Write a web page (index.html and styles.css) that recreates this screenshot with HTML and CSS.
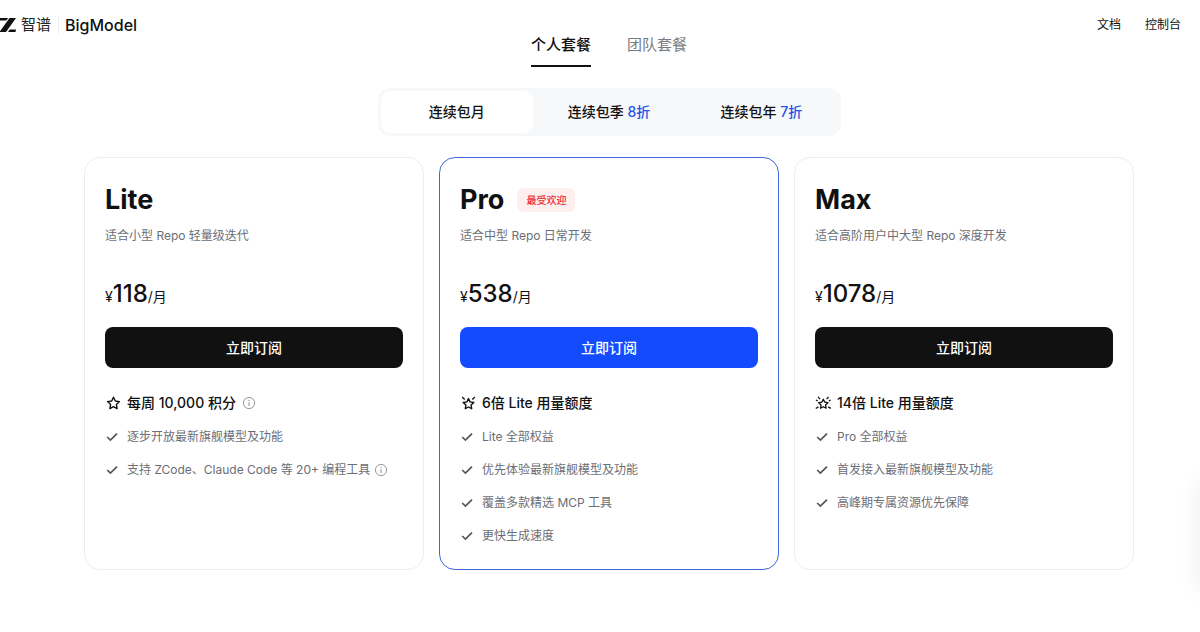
FILE: index.html
```
<!DOCTYPE html>
<html lang="zh-CN">
<head>
    <meta charset="UTF-8">
    <meta name="viewport" content="width=device-width, initial-scale=1.0">
    <title>智谱 BigModel</title>
    <link rel="stylesheet" href="styles.css">
</head>
<body>
    <!-- shared icons -->
    <svg class="sprite" aria-hidden="true">
        <symbol id="check" viewBox="0 0 14 14">
            <path d="M2.2 7 5.400 10 12 3.600" fill="none" stroke="currentColor" stroke-width="1.700"/>
        </symbol>
        <symbol id="info" viewBox="0 0 14 14">
            <circle cx="7" cy="7" r="5.6" fill="none" stroke="currentColor" stroke-width="0.9"/>
            <path d="M7 6.2V10" fill="none" stroke="currentColor" stroke-width="1"/>
            <circle cx="7" cy="4.4" r="0.7" fill="currentColor"/>
        </symbol>
        <symbol id="star" viewBox="0 0 16 16">
            <path d="M8.500 2.200 10.300 6l4.100.6-3 2.900.7 4.100-3.600-1.900-3.600 1.900.7-4.100-3-2.900 4.100-.6z" fill="none" stroke="currentColor" stroke-width="1.4" stroke-linejoin="round"/>
        </symbol>
        <symbol id="star-two" viewBox="0 0 16 16">
            <path d="M8.500 3.600 10.100 6.900l3.700.6-2.700 2.600.6 3.600-3.200-1.700-3.200 1.700.6-3.600L3.200 7.500l3.700-.6z" fill="none" stroke="currentColor" stroke-width="1.4" stroke-linejoin="round"/>
            <path d="M2.200 2 4.700 4.400M14.800 2 12.300 4.400" fill="none" stroke="currentColor" stroke-width="1.4"/>
        </symbol>
        <symbol id="star-four" viewBox="0 0 16 16">
            <path d="M8.300 4.200 9.800 7.200l3.100.5-2.300 2.300.5 3.200-2.800-1.500-2.800 1.500.5-3.200L3.700 7.700l3.100-.5z" fill="none" stroke="currentColor" stroke-width="1.300" stroke-linejoin="round"/>
            <path d="M3 1.800 5 4.200M13.600 1.800 11.600 4.200M.9 5l1.800.9M15.700 5l-1.800.9M.8 13.500l2.600-1.600M15.800 13.500l-2.600-1.600" fill="none" stroke="currentColor" stroke-width="1.300"/>
        </symbol>
    </svg>

    <header class="header">
        <a class="brand" href="#">
            <svg class="brand-mark" viewBox="0 0 16 14" aria-hidden="true">
                <path d="M0 0H8.300L6.200 2.500H0zM9.500 0h6.500L6 14H0V13.300zM9.800 11.500H16L15.500 14H8z" fill="#111"/>
            </svg>
            <span class="brand-cn">智谱</span>
            <span class="brand-en">BigModel</span>
        </a>
        <nav class="nav">
            <a href="#">文档</a>
            <a href="#">控制台</a>
        </nav>
    </header>

    <main class="main">
        <div class="tabs">
            <button class="tab active" type="button">个人套餐</button>
            <button class="tab" type="button">团队套餐</button>
        </div>

        <div class="period">
            <button class="period-item active" type="button">连续包月</button>
            <button class="period-item" type="button">连续包季 <span class="discount">8折</span></button>
            <button class="period-item" type="button">连续包年 <span class="discount">7折</span></button>
        </div>

        <div class="plans">
            <section class="card">
                <h2 class="title">Lite</h2>
                <p class="desc">适合小型 Repo 轻量级迭代</p>
                <p class="price">¥<span class="amount">118</span>/月</p>
                <button class="buy" type="button">立即订阅</button>
                <ul class="features">
                    <li class="quota"><svg class="star"><use href="#star"/></svg>每周 10,000 积分<svg class="info"><use href="#info"/></svg></li>
                    <li><svg class="check"><use href="#check"/></svg>逐步开放最新旗舰模型及功能</li>
                    <li><svg class="check"><use href="#check"/></svg>支持 ZCode、Claude Code 等 20+ 编程工具<svg class="info"><use href="#info"/></svg></li>
                </ul>
            </section>

            <section class="card popular">
                <h2 class="title">Pro <span class="badge">最受欢迎</span></h2>
                <p class="desc">适合中型 Repo 日常开发</p>
                <p class="price">¥<span class="amount">538</span>/月</p>
                <button class="buy" type="button">立即订阅</button>
                <ul class="features">
                    <li class="quota"><svg class="star"><use href="#star-two"/></svg>6倍 Lite 用量额度</li>
                    <li><svg class="check"><use href="#check"/></svg>Lite 全部权益</li>
                    <li><svg class="check"><use href="#check"/></svg>优先体验最新旗舰模型及功能</li>
                    <li><svg class="check"><use href="#check"/></svg>覆盖多款精选 MCP 工具</li>
                    <li><svg class="check"><use href="#check"/></svg>更快生成速度</li>
                </ul>
            </section>

            <section class="card">
                <h2 class="title">Max</h2>
                <p class="desc">适合高阶用户中大型 Repo 深度开发</p>
                <p class="price">¥<span class="amount">1078</span>/月</p>
                <button class="buy" type="button">立即订阅</button>
                <ul class="features">
                    <li class="quota"><svg class="star"><use href="#star-four"/></svg>14倍 Lite 用量额度</li>
                    <li><svg class="check"><use href="#check"/></svg>Pro 全部权益</li>
                    <li><svg class="check"><use href="#check"/></svg>首发接入最新旗舰模型及功能</li>
                    <li><svg class="check"><use href="#check"/></svg>高峰期专属资源优先保障</li>
                </ul>
            </section>
        </div>
    </main>

    <div class="side-dock"></div>
</body>
</html>
```
FILE: styles.css
```
* {
    box-sizing: border-box;
}

body {
    margin: 0;
    font-family: Inter, "Noto Sans CJK SC", sans-serif;
    font-size: 12px;
    line-height: 20px;
    color: #111;
    background-color: #fff;
    overflow-x: hidden;
}

h2, p, ul {
    margin: 0;
    padding: 0;
}

a {
    color: inherit;
    text-decoration: none;
}

button {
    font: inherit;
    color: inherit;
    padding: 0;
    border: none;
    background: none;
    cursor: pointer;
}

svg {
    flex: none;
}

.sprite {
    position: absolute;
    width: 0;
    height: 0;
}

.header {
    display: flex;
    justify-content: space-between;
    align-items: center;
    padding: 15px 19px 0 0;
}

.brand {
    display: flex;
    align-items: center;
    line-height: 18px;
}

.brand-mark {
    width: 16px;
    height: 14px;
    margin-right: 5px;
}

.brand-cn {
    font-size: 15px;
    color: #222;
    padding-right: 7px;
    border-right: 1px solid #eee;
}

.brand-en {
    font-size: 16px;
    font-weight: 500;
    padding-left: 6px;
}

.nav {
    display: flex;
    gap: 24px;
}

.main {
    padding: 0 0 62px 18px;
}

.tabs {
    display: flex;
    justify-content: center;
    gap: 36px;
}

.tab {
    padding-bottom: 10px;
    font-size: 15px;
    color: #777b82;
    border-bottom: 2px solid transparent;
}

.tab.active {
    font-weight: 500;
    color: #111;
    border-color: #111;
}

.period {
    display: flex;
    max-width: 463px;
    margin: 21px auto;
    padding: 3px;
    border-radius: 12px;
    background-color: #f7f8fa;
}

.period-item {
    flex: 1;
    height: 42px;
    font-size: 14px;
    font-weight: 500;
    border-radius: 10px;
}

.period-item.active {
    background-color: #fff;
}

.discount {
    color: #2454e6;
}

.plans {
    display: grid;
    grid-template-columns: repeat(3, 1fr);
    gap: 15px;
    max-width: 1050px;
    margin: 0 auto;
}

.card {
    padding: 21px 20px 23px;
    border: 1px solid #eee;
    border-radius: 16px;
}

.card.popular {
    border-color: #3f68dd;
}

.title {
    display: flex;
    align-items: center;
    gap: 13px;
    font-size: 27px;
    font-weight: 700;
    line-height: 42px;
}

.badge {
    padding: 2px 9px;
    font-size: 10px;
    font-weight: 500;
    line-height: 20px;
    color: #ee2b33;
    background-color: #feeeee;
    border-radius: 6px;
}

.desc {
    margin-top: 5px;
    color: #6b6e75;
}

.price {
    height: 36px;
    margin: 30px 0 15px;
    font-size: 14px;
    line-height: 20px;
}

.amount {
    font-size: 24px;
    font-weight: 500;
    line-height: 36px;
}

.buy {
    width: 100%;
    height: 41px;
    font-size: 14px;
    font-weight: 500;
    color: #fff;
    background-color: #111;
    border-radius: 8px;
}

.popular .buy {
    background-color: #134cff;
}

.features {
    display: flex;
    flex-direction: column;
    gap: 13px;
    margin-top: 24px;
    list-style: none;
}

.features li {
    display: flex;
    align-items: center;
    color: #6b6e75;
}

.features .quota {
    font-size: 14px;
    font-weight: 500;
    line-height: 22px;
    color: #111;
}

.check {
    width: 14px;
    height: 14px;
    margin-right: 8px;
    color: #555;
}

.star {
    width: 16px;
    height: 16px;
    margin-right: 6px;
}

.info {
    width: 14px;
    height: 14px;
    margin-left: 4px;
    color: #8a8d93;
}

.quota .info {
    margin-left: 6px;
}

/* floating dock, only its shadow reaches the page edge */
.side-dock {
    position: fixed;
    right: -48px;
    top: 480px;
    width: 48px;
    height: 110px;
    border-radius: 12px;
    box-shadow: 0 0 24px rgba(0, 0, 0, 0.08);
}
```
